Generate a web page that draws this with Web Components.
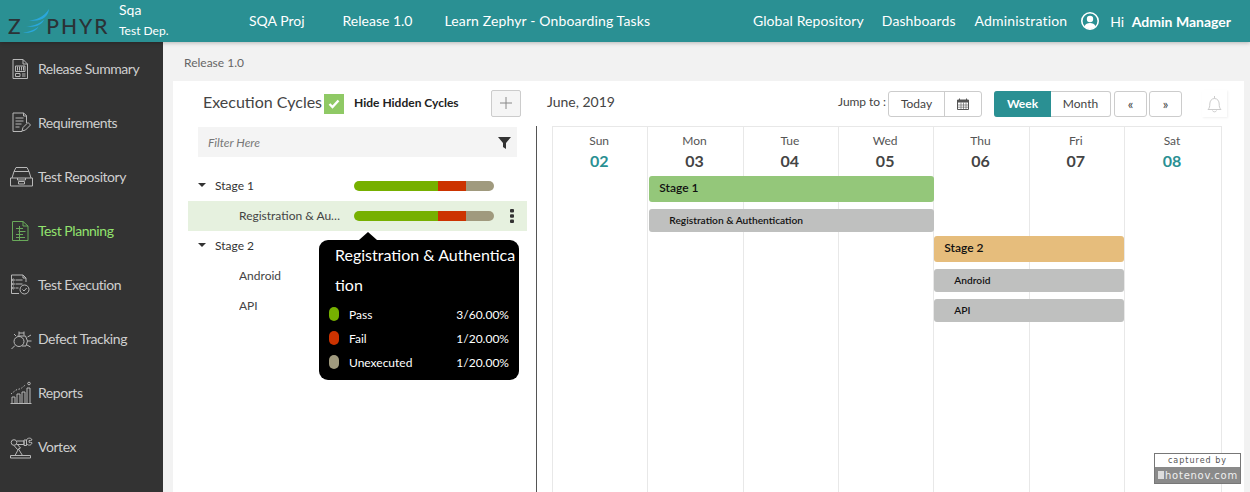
<!DOCTYPE html>
<html>
<head>
<meta charset="utf-8">
<title>Test Planning</title>
<style>
  html, body { margin: 0; padding: 0; height: 100%; overflow: hidden; }
  body { font-family: Lato, "Liberation Sans", sans-serif; background: #f2f2f2; }
</style>
</head>
<body>
<zephyr-shell>
  <zephyr-header slot="header"></zephyr-header>
  <zephyr-sidebar slot="sidebar">
    <nav-item icon="summary">Release Summary</nav-item>
    <nav-item icon="requirements">Requirements</nav-item>
    <nav-item icon="repository">Test Repository</nav-item>
    <nav-item icon="planning" active>Test Planning</nav-item>
    <nav-item icon="execution">Test Execution</nav-item>
    <nav-item icon="defect">Defect Tracking</nav-item>
    <nav-item icon="reports">Reports</nav-item>
    <nav-item icon="vortex">Vortex</nav-item>
  </zephyr-sidebar>
  <planning-card>
    <cycle-toolbar slot="left-bar"></cycle-toolbar>
    <calendar-toolbar slot="right-bar"></calendar-toolbar>
    <cycle-tree slot="left">
      <cycle-row parent>Stage 1</cycle-row>
      <cycle-row selected>Registration &amp; Authentication</cycle-row>
      <cycle-row parent nobar>Stage 2</cycle-row>
      <cycle-row nobar>Android</cycle-row>
      <cycle-row nobar>API</cycle-row>
      <progress-tip slot="tip"></progress-tip>
    </cycle-tree>
    <week-calendar slot="right"></week-calendar>
  </planning-card>
  <capture-mark slot="mark"></capture-mark>
</zephyr-shell>

<script>
class ZephyrShell extends HTMLElement {
  constructor() {
    super();
    this.attachShadow({ mode: 'open' });
  }

  connectedCallback() {
    this.shadowRoot.innerHTML = `<style>
        :host { display: grid; grid-template-columns: 163px 1fr; grid-template-rows: 42px 1fr; height: 492px; width: 1250px; position: relative; overflow: hidden; }
        .head { grid-column: 1 / -1; position: relative; z-index: 2; box-shadow: 0 1px 4px rgba(0,0,0,.25); }
        .main { display: flex; flex-direction: column; padding: 0 6px 0 10px; min-width: 0; min-height: 0; }
        .crumb { font-size: 12px; color: #666; height: 39px; line-height: 41px; padding-left: 11px; flex: none; }
      </style>
      <div class="head"><slot name="header"></slot></div>
      <slot name="sidebar"></slot>
      <div class="main">
        <div class="crumb">Release 1.0</div>
        <slot></slot>
      </div>
      <slot name="mark"></slot>`;
  }
}

class ZephyrHeader extends HTMLElement {
  constructor() {
    super();
    this.attachShadow({ mode: 'open' });
  }

  connectedCallback() {
    this.shadowRoot.innerHTML = `<style>
        :host { display: flex; align-items: center; height: 42px; background: #2a9093; color: #fff; font-size: 14px; }
        .logo { display: flex; width: 119px; padding: 9px 0 0 8px; box-sizing: border-box; color: #2b3236; font-size: 21px; font-weight: 500; line-height: 33px; height: 42px; flex: none; }
        .logo span { letter-spacing: 2px; }
        .logo span:first-child { letter-spacing: 2.600px; }
        .logo svg { margin: 0 -3px 0 -1px; flex: none; }
        .org { width: 130px; flex: none; display: flex; flex-direction: column; }
        .org b { font-weight: 400; font-size: 14px; line-height: 20px; margin-top: -1px; }
        .org span { font-size: 12px; line-height: 20px; margin-top: 1px; }
        nav { display: flex; }
        .left a:nth-child(1) { margin-right: 38px; }
        .left a:nth-child(2) { margin-right: 32px; }
        .left a:nth-child(3) { letter-spacing: .13px; }
        .right { margin-left: auto; align-items: center; padding-right: 19px; letter-spacing: .1px; }
        .right a { margin-left: 18px; }
        .right a:nth-child(3) { margin-left: 19px; letter-spacing: .17px; }
        a { white-space: nowrap; line-height: 42px; margin-top: -1px; }
        svg.user { margin: 0 11px 0 14px; flex: none; }
        .hi { letter-spacing: 0; }
        .hi strong { margin-left: 4px; font-weight: 700; }
      </style>
      <div class="logo"><span>Z</span><svg width="27" height="24" viewBox="0 0 27 24">
          <path d="M7 11.500 C13 11.500 22 8 27 0 C26.500 7 20 13.500 7 11.500z" fill="#2aa7dc"/>
          <path d="M4 17.500 C9 17.500 18 15 22 10.500 C20.500 15.500 13 19 4 17.500z" fill="#2aa7dc"/>
          <path d="M1 23.500 C6 23 12 21.500 16.500 17.500 C15 21.500 8 25 1 23.500z" fill="#2aa7dc"/>
        </svg><span>PHYR</span></div>
      <div class="org"><b>Sqa</b><span>Test Dep.</span></div>
      <nav class="left">
        <a>SQA Proj</a><a>Release 1.0</a><a>Learn Zephyr - Onboarding Tasks</a>
      </nav>
      <nav class="right">
        <a>Global Repository</a><a>Dashboards</a><a>Administration</a>
        <svg class="user" width="18" height="18" viewBox="0 0 18 18">
          <circle cx="9" cy="9" r="8.200" fill="#2a9093" stroke="#fff" stroke-width="1.600"/>
          <circle cx="9" cy="7" r="3.200" fill="#fff"/>
          <path d="M3.400 14.600 C4.400 11.600 6.600 11 9 11 C11.400 11 13.600 11.600 14.600 14.600 C13 16.200 11 17 9 17 C7 17 5 16.200 3.400 14.600z" fill="#fff"/>
        </svg>
        <span class="hi">Hi <strong>Admin Manager</strong></span>
      </nav>`;
  }
}

class ZephyrSidebar extends HTMLElement {
  constructor() {
    super();
    this.attachShadow({ mode: 'open' });
  }

  connectedCallback() {
    this.shadowRoot.innerHTML = `<style>
        :host { display: flex; flex-direction: column; background: #333; }
      </style>
      <slot></slot>`;
  }
}

const NAV_ICONS = {
  summary: `<path d="M5 2.500h10l4.500 4.500v14.500H5z"/><path d="M15 2.500V7h4.500"/><path d="M7.500 9h9.500v5.500H7.500z"/><path d="M9.500 9.500v4M11.500 9.500v4M13.500 9.500v4M15.500 9.500v4"/><path d="M7.500 16.500h4.500v3H7.500zM14 17h3.500M14 19h3.500"/>`,
  requirements: `<path d="M18.500 12V4.500l-3-2.500H5v18.500h9"/><path d="M15.500 2v3h3"/><path d="M7.500 7h8M7.500 10h8M7.500 13h6M7.500 16h4"/><path d="M14 20l1-3.500 5-5 2.500 2.500-5 5z"/>`,
  repository: `<path d="M6 6.500 8 2.500h11l2 4"/><path d="M4 13 6 6.500h15L23 13"/><path d="M2.500 13h22v8h-22z"/><path d="M9.500 13v2h8v-2"/><path d="M10.500 16.500h6v2.500h-6z"/>`,
  planning: `<path d="M4.500 2.500h10.500l5 4.500v14.500h-15.500z"/><path d="M15 2.500V7h5"/><path d="M8 9.500h7M10.500 12.500h7M8 15.500h7M8 18.500h9"/><path d="M11.500 7v14"/>`,
  execution: `<path d="M18 9V5l-3-3H3.500v18.500H11"/><path d="M15 2v3h3"/><path d="M7.500 7h7M7.500 11h7M7.500 15h3"/><circle cx="5.300" cy="7" r="1"/><circle cx="5.300" cy="11" r="1"/><circle cx="5.300" cy="15" r="1"/><circle cx="16.500" cy="16.500" r="4.500"/><path d="M14.500 16.500l1.500 1.500 2.700-3"/>`,
  defect: `<path d="M9.500 9h8l2 5-1.500 5h-4"/><circle cx="11" cy="14.500" r="5"/><path d="M7 18.500 3.500 22"/><path d="M11 4.500v4M16 4.500v4M11 6h5"/><path d="M19.500 10l3.500-2M20 14h3.500M19 18l3.500 2"/><path d="M8 9 6 7"/>`,
  reports: `<path d="M4 22v-6h3v6M9 22V13h3v9M14 22v-11h3v11M19 22V7h3v15"/><path d="M2.500 22.500h21"/><path d="M3 13l5-4 5-1.500 5-4" stroke-dasharray="1.500 1.500"/><circle cx="21" cy="2.500" r="1.300"/>`,
  vortex: `<path d="M2.500 20.500h20v2.500h-20z"/><path d="M7 20.500l3.500-6.500 4 6.500"/><circle cx="6" cy="7.500" r="2.800"/><path d="M6 10.500l3.500 4 3-1.500-3.500-4"/><path d="M9 6h7v3.500H8.500"/><path d="M16 5h2.500v5.500H16z"/><path d="M18.500 5c1-2.500 5-2.500 5.500 0-1 .5-2 .5-3 .5v1.800c1 0 2 0 3 .5-.5 3-4.500 3-5.500.5"/>`
};

class NavItem extends HTMLElement {
  constructor() {
    super();
    this.attachShadow({ mode: 'open' });
  }

  connectedCallback() {
    this.shadowRoot.innerHTML = `<style>
        :host { display: flex; align-items: center; gap: 4px; height: 54px; padding-left: 8px; color: #cfcfcf; font-size: 14px; letter-spacing: -.45px; white-space: nowrap; }
        :host([active]) { color: #92e36e; }
        svg { flex: none; fill: none; stroke: #b8b8b8; stroke-width: 1; }
        :host([active]) svg { stroke: #69a95a; }
        span { padding-bottom: 2px; }
      </style>
      <svg width="26" height="24" viewBox="0 0 26 24">${NAV_ICONS[this.getAttribute('icon')]}</svg>
      <span><slot></slot></span>`;
  }
}

class PlanningCard extends HTMLElement {
  constructor() {
    super();
    this.attachShadow({ mode: 'open' });
  }

  connectedCallback() {
    this.shadowRoot.innerHTML = `<style>
        :host { display: grid; grid-template-columns: 364px 1fr; grid-template-rows: 45px 1fr; flex: 1; min-height: 0; background: #fff; }
      </style>
      <slot name="left-bar"></slot>
      <slot name="right-bar"></slot>
      <slot name="left"></slot>
      <slot name="right"></slot>`;
  }
}

class CycleToolbar extends HTMLElement {
  constructor() {
    super();
    this.attachShadow({ mode: 'open' });
  }

  connectedCallback() {
    this.shadowRoot.innerHTML = `<style>
        :host { display: flex; align-items: center; padding-left: 30px; color: #444; }
        .title { font-size: 16px; margin: -4px 2px 0 0; }
        .check { width: 20px; height: 20px; background: #8fc965; display: flex; align-items: center; justify-content: center; margin-right: 10px; }
        .hide { font-size: 12px; font-weight: 700; color: #222; width: 137px; margin-top: -3px; }
        button { width: 30px; height: 27px; background: #f5f5f5; border: 1px solid #ccc; border-radius: 2px; padding: 0; display: flex; align-items: center; justify-content: center; margin-top: -1px; }
      </style>
      <span class="title">Execution Cycles</span>
      <span class="check"><svg width="12" height="10" viewBox="0 0 12 10"><path d="M1.500 5l3 3 6-6.500" fill="none" stroke="#fff" stroke-width="2.400"/></svg></span>
      <span class="hide">Hide Hidden Cycles</span>
      <button aria-label="Add cycle"><svg width="12" height="12" viewBox="0 0 12 12"><path d="M6 0v12M0 6h12" stroke="#888" stroke-width="1"/></svg></button>`;
  }
}

class CalendarToolbar extends HTMLElement {
  constructor() {
    super();
    this.attachShadow({ mode: 'open' });
  }

  connectedCallback() {
    this.shadowRoot.innerHTML = `<style>
        :host { display: flex; align-items: center; padding: 0 17px 0 10px; color: #444; }
        .month { font-size: 14px; margin-top: -4px; }
        .jump { margin-left: auto; font-size: 12px; margin-right: 2px; margin-top: -4px; letter-spacing: -.05px; }
        .group { display: flex; height: 26px; box-sizing: border-box; border: 1px solid #ccc; border-radius: 3px; font-size: 12px; }
        .group > * { display: flex; align-items: center; justify-content: center; }
        .today { width: 55px; border-right: 1px solid #ccc; }
        .cal { width: 36px; }
        .views { margin-left: 12px; border-left: 0; }
        .week { width: 57px; margin: -1px 0; background: #2a9093; color: #fff; border-radius: 3px 0 0 3px; font-weight: 700; }
        .mon { width: 59px; }
        .step { margin-left: 3px; width: 33px; align-items: center; justify-content: center; font-size: 13px; }
        .step + .step { margin-left: 2px; }
        .bell { width: 25px; height: 27px; margin-left: 20px; display: flex; align-items: center; justify-content: center; box-shadow: 1px 1px 2px rgba(0,0,0,.06); }
      </style>
      <span class="month">June, 2019</span>
      <span class="jump">Jump to :</span>
      <div class="group">
        <span class="today">Today</span>
        <span class="cal"><svg width="12" height="12" viewBox="0 0 12 12"><path d="M.5 2h11v9.500H.5z" fill="none" stroke="#555"/><path d="M.5 2h11v2.500H.5z" fill="#555"/><path d="M2.500.5v2M9.500.5v2" stroke="#555"/><path d="M4 4.500v7M6.500 4.500v7M9 4.500v7M.5 7h11M.5 9.200h11" stroke="#555" stroke-width=".6"/></svg></span>
      </div>
      <div class="group views"><span class="week">Week</span><span class="mon">Month</span></div>
      <div class="group step">&laquo;</div>
      <div class="group step">&raquo;</div>
      <span class="bell"><svg width="15" height="18" viewBox="0 0 15 18"><path d="M1 14.500c1.500-1.500 1.800-3 1.800-5.500 0-3 1.800-5.500 4.700-5.500s4.700 2.500 4.700 5.500c0 2.500.3 4 1.800 5.500z" fill="none" stroke="#ccc"/><path d="M7.500 1v2.500M5.500 15.500c.3 1.800 3.700 1.800 4 0" fill="none" stroke="#ccc"/></svg></span>`;
  }
}

class CycleTree extends HTMLElement {
  constructor() {
    super();
    this.attachShadow({ mode: 'open' });
  }

  connectedCallback() {
    this.shadowRoot.innerHTML = `<style>
        :host { display: block; position: relative; border-right: 1px solid #555; min-height: 0; }
        .filter { display: flex; align-items: center; justify-content: space-between; height: 30px; margin: 1px 19px 14px 25px; padding: 0 6px 0 10px; background: #f4f4f4; font-size: 12px; font-style: italic; color: #777; }
        .rows { margin-left: 15px; margin-right: 9px; }
      </style>
      <div class="filter">Filter Here
        <svg width="13" height="13" viewBox="0 0 13 13"><path d="M0 1h13L8 7v6L5 11V7z" fill="#333"/></svg>
      </div>
      <div class="rows"><slot></slot></div>
      <slot name="tip"></slot>`;
  }
}

class CycleRow extends HTMLElement {
  constructor() {
    super();
    this.attachShadow({ mode: 'open' });
  }

  connectedCallback() {
    const isParent = this.hasAttribute('parent');
    const bar = this.hasAttribute('nobar') ? '' : `<div class="bar"><i style="width:84px;background:#76b000"></i><i style="width:28px;background:#cc3300"></i><i style="width:28px;background:#a09a7e"></i></div>`;
    const kebab = this.hasAttribute('selected') ? `<svg width="4" height="14" viewBox="0 0 4 14"><rect width="4" height="3.400" rx="1" fill="#333"/><rect y="5.300" width="4" height="3.400" rx="1" fill="#333"/><rect y="10.600" width="4" height="3.400" rx="1" fill="#333"/></svg>` : '';
    this.shadowRoot.innerHTML = `<style>
        :host { display: grid; grid-template-columns: 166px 140px 1fr; align-items: center; height: 30px; font-size: 12px; color: #444; }
        :host([selected]) { background: #e6f1df; }
        .label { display: flex; align-items: center; gap: 9px; padding: 0 12px 2px 51px; min-width: 0; }
        :host([parent]) .label { padding-left: 10px; color: #333; }
        .caret { width: 0; height: 0; border: 4px solid transparent; border-top: 4px solid #333; border-bottom: 0; flex: none; }
        .text { overflow: hidden; white-space: nowrap; text-overflow: ellipsis; min-width: 0; }
        .bar { display: flex; height: 10px; border-radius: 5px; overflow: hidden; }
        .bar i { display: block; }
        .more { padding-left: 16px; display: flex; align-items: center; }
      </style>
      <div class="label">${isParent ? '<span class="caret"></span>' : ''}<span class="text"><slot></slot></span></div>
      ${bar || '<span></span>'}
      <div class="more">${kebab}</div>`;
  }
}

class ProgressTip extends HTMLElement {
  constructor() {
    super();
    this.attachShadow({ mode: 'open' });
  }

  connectedCallback() {
    const rows = [
      ['Pass', '3/60.00%', '#76b000'],
      ['Fail', '1/20.00%', '#cc3300'],
      ['Unexecuted', '1/20.00%', '#a09a7e']
    ];
    this.shadowRoot.innerHTML = `<style>
        :host { display: block; position: absolute; left: 146px; top: 114px; width: 200px; height: 140px; box-sizing: border-box; background: #000; color: #fff; border-radius: 9px; padding: 0 2px 0 10px; }
        :host::before { content: ""; position: absolute; left: 40px; top: -8px; border: 9px solid transparent; border-top: 0; border-bottom: 8px solid #000; }
        h4 { margin: 0 0 2px 6px; font-size: 16px; font-weight: 400; line-height: 30px; word-break: break-all; }
        .row { display: grid; grid-template-columns: 10px 1fr auto; column-gap: 10px; align-items: center; height: 24px; font-size: 12px; padding-right: 8px; }
        .row i { display: block; height: 14px; border-radius: 5px; }
      </style>
      <h4>Registration &amp; Authentication</h4>
      ${rows.map(r => `<div class="row"><i style="background:${r[2]}"></i><span>${r[0]}</span><span>${r[1]}</span></div>`).join('')}`;
  }
}

class WeekCalendar extends HTMLElement {
  constructor() {
    super();
    this.attachShadow({ mode: 'open' });
  }

  connectedCallback() {
    const days = [['Sun', '02', 1], ['Mon', '03'], ['Tue', '04'], ['Wed', '05'], ['Thu', '06'], ['Fri', '07'], ['Sat', '08', 1]];
    const bars = [
      ['Stage 1', 'green', '2 / 5', 0],
      ['Registration &amp; Authentication', 'grey sub', '2 / 5', 7],
      ['Stage 2', 'orange', '5 / 7', 4],
      ['Android', 'grey', '5 / 7', 7],
      ['API', 'grey', '5 / 7', 7]
    ];
    this.shadowRoot.innerHTML = `<style>
        :host { display: block; padding: 0 22px 0 15px; min-height: 0; }
        .grid { display: grid; grid-template-columns: repeat(6, 95.330px) 1fr; grid-template-rows: 49px repeat(5, auto) 1fr; height: 100%; box-sizing: border-box; border-top: 1px solid #e8e8e8; border-right: 1px solid #e8e8e8; }
        .day { grid-row: 1 / -1; border-left: 1px solid #e8e8e8; text-align: center; padding: 6px 2px 0 0; font-size: 12px; color: #555; }
        .day b { display: block; font-size: 16px; font-weight: 700; color: #444; margin-top: 3px; line-height: 20px; }
        .day.off b { color: #2a9093; }
        .day span { display: block; line-height: 15px; }
        .ev { position: relative; z-index: 1; margin-left: 1px; border-radius: 3px; display: flex; align-items: center; box-sizing: border-box; font-size: 12px; font-weight: 600; color: #111; padding: 0 0 4px 10px; height: 26px; }
        .green { background: #94c77a; margin-left: 2px; margin-right: -1px; }
        .orange { background: #e6bd7c; }
        .grey { background: #bfc0bf; height: 23px; font-size: 10.200px; padding: 0 0 1px 20px; }
        .grey.sub { margin-left: 2px; margin-right: -1px; }
      </style>
      <div class="grid">
        ${days.map((d, i) => `<div class="day${d[2] ? ' off' : ''}" style="grid-column:${i + 1}"><span>${d[0]}</span><b>${d[1]}</b></div>`).join('')}
        ${bars.map((b, i) => `<div class="ev ${b[1]}" style="grid-column:${b[2]};grid-row:${i + 2};margin-top:${b[3]}px">${b[0]}</div>`).join('')}
      </div>`;
  }
}

class CaptureMark extends HTMLElement {
  constructor() {
    super();
    this.attachShadow({ mode: 'open' });
  }

  connectedCallback() {
    this.shadowRoot.innerHTML = `<style>
        :host { display: block; position: absolute; left: 1154px; top: 453px; width: 87px; height: 31px; box-sizing: border-box; border: 1px solid #777; background: #8a8a8a; font-family: "DejaVu Sans", sans-serif; color: #fff; text-align: center; }
        .top { background: #fff; color: #555; height: 13px; font-size: 8px; line-height: 13px; letter-spacing: 1px; }
        .low { display: flex; align-items: center; justify-content: flex-start; gap: 1px; padding-left: 3px; height: 16px; font-size: 10px; letter-spacing: .75px; color: #f0f0f0; }
        i { display: block; width: 6px; height: 8px; background: #ddd; flex: none; }
      </style>
      <div class="top">captured by</div>
      <div class="low"><i></i>hotenov.com</div>`;
  }
}

customElements.define('zephyr-shell', ZephyrShell);
customElements.define('zephyr-header', ZephyrHeader);
customElements.define('zephyr-sidebar', ZephyrSidebar);
customElements.define('nav-item', NavItem);
customElements.define('planning-card', PlanningCard);
customElements.define('cycle-toolbar', CycleToolbar);
customElements.define('calendar-toolbar', CalendarToolbar);
customElements.define('cycle-tree', CycleTree);
customElements.define('cycle-row', CycleRow);
customElements.define('progress-tip', ProgressTip);
customElements.define('week-calendar', WeekCalendar);
customElements.define('capture-mark', CaptureMark);
</script>
</body>
</html>
